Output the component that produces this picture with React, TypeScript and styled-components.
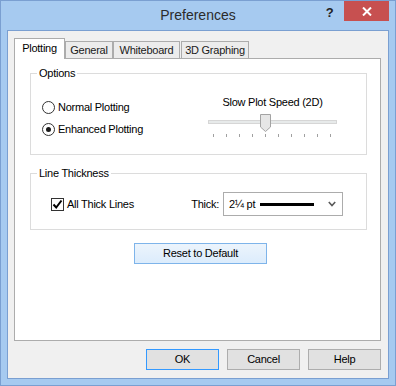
import styled, { createGlobalStyle } from "styled-components";

const GlobalStyle = createGlobalStyle`
  html, body {
    margin: 0;
    padding: 0;
    background: #ffffff;
  }
  body {
    font-family: "Liberation Sans", Arial, sans-serif;
    font-size: 11px;
    letter-spacing: -0.25px;
    color: #000000;
  }
  * {
    box-sizing: border-box;
  }
`;

const Window = styled.div`
  width: 396px;
  height: 386px;
  background-color: #a6caf0;
  border: 1px solid #7a9fd1;
  padding: 0 6px 6px;
  display: flex;
  flex-direction: column;
`;

const TitleBar = styled.div`
  height: 29px;
  flex: none;
  display: grid;
  grid-template-columns: 1fr auto 1fr;
`;

const Title = styled.div`
  grid-column: 2;
  font-size: 14px;
  letter-spacing: 0;
  line-height: 28px;
  color: #2b2b2b;
`;

const Controls = styled.div`
  grid-column: 3;
  justify-self: end;
  display: flex;
  align-items: flex-start;
`;

const HelpGlyph = styled.div`
  width: 29px;
  height: 20px;
  font-size: 13px;
  font-weight: 700;
  line-height: 24px;
  text-align: center;
  color: #222222;
`;

const CloseButton = styled.div`
  width: 45px;
  height: 20px;
  background-color: #c75050;
  display: flex;
  align-items: center;
  justify-content: center;
`;

const Client = styled.div`
  flex: 1;
  background-color: #f0f0f0;
  border: 1px solid #7a9fd1;
  padding: 7px 7px 8px 6px;
  display: flex;
  flex-direction: column;
`;

const TabStrip = styled.div`
  height: 20px;
  display: flex;
  align-items: flex-end;
  position: relative;
  z-index: 1;
`;

const Tab = styled.div<{ $active?: boolean; $w: number; $gap?: number }>`
  width: ${(p) => p.$w}px;
  height: ${(p) => (p.$active ? 21 : 17)}px;
  margin-bottom: ${(p) => (p.$active ? -1 : 0)}px;
  margin-left: ${(p) => p.$gap ?? 0}px;
  background-color: ${(p) => (p.$active ? "#ffffff" : "#ececec")};
  border: 1px solid #acacac;
  border-bottom: none;
  text-align: center;
  line-height: ${(p) => (p.$active ? 18 : 16)}px;
  color: ${(p) => (p.$active ? "#000000" : "#1a1a1a")};
`;

const Panel = styled.div`
  height: 283px;
  flex: none;
  background-color: #ffffff;
  border: 1px solid #acacac;
  padding: 0 13px 0 15px;
  display: flex;
  flex-direction: column;
`;

const Group = styled.fieldset<{ $h: number; $top: number }>`
  margin: ${(p) => p.$top}px 0 0;
  padding: 0;
  min-width: 0;
  height: ${(p) => p.$h}px;
  border: 1px solid #dcdcdc;
`;

const Legend = styled.legend`
  margin-left: 6px;
  padding: 0 2px;
  height: 15px;
  line-height: 15px;
  color: #000000;
`;

const OptionsBody = styled.div`
  display: flex;
  justify-content: space-between;
  padding-right: 29px;
`;

const RadioColumn = styled.div`
  margin-top: 15px;
  padding-left: 11px;
  display: flex;
  flex-direction: column;
`;

const ChoiceRow = styled.div<{ $h?: number }>`
  height: ${(p) => p.$h ?? 22}px;
  display: flex;
  align-items: center;
`;

const RadioCircle = styled.span<{ $checked?: boolean }>`
  width: 13px;
  height: 13px;
  border-radius: 50%;
  border: 1px solid #333333;
  background-color: #ffffff;
  display: flex;
  align-items: center;
  justify-content: center;

  &::after {
    content: "";
    display: ${(p) => (p.$checked ? "block" : "none")};
    width: 5px;
    height: 5px;
    border-radius: 50%;
    background-color: #1a1a1a;
  }
`;

const ChoiceLabel = styled.span`
  margin-left: 3px;
`;

const SpeedColumn = styled.div`
  width: 129px;
  margin-top: 13px;
  display: flex;
  flex-direction: column;
`;

const SpeedLabel = styled.div`
  height: 16px;
  line-height: 16px;
  text-align: center;
  white-space: nowrap;
`;

const SliderBox = styled.div`
  position: relative;
  height: 24px;
  margin-top: 4px;
`;

const Track = styled.div`
  margin-top: 6px;
  height: 4px;
  background-color: #e7eaea;
  border: 1px solid #d6d6d6;
`;

const Ticks = styled.div`
  margin-top: 10px;
  padding: 0 6px 0 5px;
  display: flex;
  justify-content: space-between;
`;

const Tick = styled.span`
  width: 1px;
  height: 3px;
  background-color: #a0a0a0;
`;

const Thumb = styled.svg<{ $left: number }>`
  position: absolute;
  top: 0;
  left: ${(p) => p.$left}px;
`;

const ThickBody = styled.div`
  margin-top: 11px;
  padding: 0 23px 0 20px;
  display: flex;
  align-items: center;
  justify-content: space-between;
  height: 24px;
`;

const CheckBox = styled.span`
  width: 13px;
  height: 13px;
  border: 1px solid #333333;
  background-color: #ffffff;
  display: flex;
  align-items: center;
  justify-content: center;
`;

const ThickField = styled.div`
  display: flex;
  align-items: center;
`;

const ComboBox = styled.div`
  width: 120px;
  height: 24px;
  margin-left: 4px;
  border: 1px solid #acacac;
  background-color: #ffffff;
  padding: 0 6px 0 5px;
  display: flex;
  align-items: center;
`;

const LineSample = styled.span`
  width: 54px;
  height: 3px;
  margin-left: 5px;
  background-color: #000000;
`;

const Chevron = styled.svg`
  margin-left: auto;
`;

const ResetRow = styled.div`
  margin-top: 13px;
  padding-left: 4px;
  display: flex;
  justify-content: center;
`;

const Button = styled.div<{ $w: number; $tone?: "default" | "focus" }>`
  width: ${(p) => p.$w}px;
  height: 21px;
  line-height: 19px;
  text-align: center;
  color: #000000;
  border: 1px solid
    ${(p) =>
      p.$tone === "focus" ? "#7eb4ea" : p.$tone === "default" ? "#3399ff" : "#adadad"};
  background: ${(p) =>
    p.$tone === "focus" ? "linear-gradient(#ecf4fc, #dcecfc)" : "#e1e1e1"};
`;

const ButtonRow = styled.div`
  margin-top: 8px;
  display: flex;
  justify-content: flex-end;
  gap: 8px;
`;

const tabs = [
  { label: "Plotting", w: 51, active: true },
  { label: "General", w: 48 },
  { label: "Whiteboard", w: 67 },
  { label: "3D Graphing", w: 68, gap: 1 },
];

const speedValue = 4;

const App = () => {
  return (
    <>
      <GlobalStyle />
      <Window>
        <TitleBar>
          <Title>Preferences</Title>
          <Controls>
            <HelpGlyph>?</HelpGlyph>
            <CloseButton>
              <svg width="10" height="9" viewBox="0 0 10 9">
                <path d="M1 0.5 L9 8.5 M9 0.5 L1 8.5" stroke="#ffffff" strokeWidth="2" />
              </svg>
            </CloseButton>
          </Controls>
        </TitleBar>

        <Client>
          <TabStrip>
            {tabs.map((t) => (
              <Tab key={t.label} $active={t.active} $w={t.w} $gap={t.gap}>
                {t.label}
              </Tab>
            ))}
          </TabStrip>

          <Panel>
            <Group $h={89} $top={7}>
              <Legend>Options</Legend>
              <OptionsBody>
                <RadioColumn>
                  <ChoiceRow>
                    <RadioCircle />
                    <ChoiceLabel>Normal Plotting</ChoiceLabel>
                  </ChoiceRow>
                  <ChoiceRow>
                    <RadioCircle $checked />
                    <ChoiceLabel>Enhanced Plotting</ChoiceLabel>
                  </ChoiceRow>
                </RadioColumn>
                <SpeedColumn>
                  <SpeedLabel>Slow Plot Speed (2D)</SpeedLabel>
                  <SliderBox>
                    <Track />
                    <Ticks>
                      {Array.from({ length: 10 }, (_, i) => (
                        <Tick key={i} />
                      ))}
                    </Ticks>
                    <Thumb $left={5 + 13 * speedValue - 5} width="11" height="18" viewBox="0 0 11 18">
                      <path
                        d="M0.5 0.5 H10.5 V13 L5.5 17.5 L0.5 13 Z"
                        fill="#e6e6e6"
                        stroke="#a3a3a3"
                      />
                    </Thumb>
                  </SliderBox>
                </SpeedColumn>
              </OptionsBody>
            </Group>

            <Group $h={64} $top={11}>
              <Legend>Line Thickness</Legend>
              <ThickBody>
                <ChoiceRow $h={24}>
                  <CheckBox>
                    <svg width="11" height="11" viewBox="0 0 11 11">
                      <path d="M1.5 5.5 L4.2 8.5 L9.5 1.5" fill="none" stroke="#000000" strokeWidth="2" />
                    </svg>
                  </CheckBox>
                  <ChoiceLabel>All Thick Lines</ChoiceLabel>
                </ChoiceRow>
                <ThickField>
                  <span>Thick:</span>
                  <ComboBox>
                    <span>2¼ pt</span>
                    <LineSample />
                    <Chevron width="8" height="6" viewBox="0 0 8 6">
                      <path d="M0.8 1 L4 4.5 L7.2 1" fill="none" stroke="#5a5a5a" strokeWidth="1.6" />
                    </Chevron>
                  </ComboBox>
                </ThickField>
              </ThickBody>
            </Group>

            <ResetRow>
              <Button $w={133} $tone="focus">
                Reset to Default
              </Button>
            </ResetRow>
          </Panel>

          <ButtonRow>
            <Button $w={73} $tone="default">
              OK
            </Button>
            <Button $w={73}>Cancel</Button>
            <Button $w={73}>Help</Button>
          </ButtonRow>
        </Client>
      </Window>
    </>
  );
};

export default App;
